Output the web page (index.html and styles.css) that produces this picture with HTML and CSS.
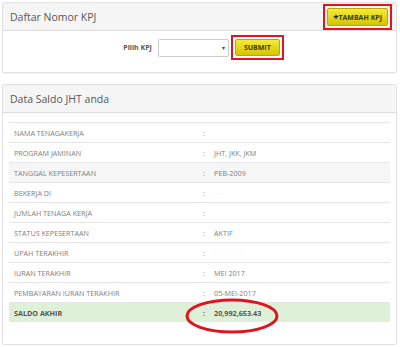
FILE: index.html
```html
<!doctype html>
<html>
  <head>
    <meta charset='utf-8'>
    <title>Saldo JHT</title>
    <link rel="stylesheet" href="styles.css">
  </head>
  <body>

    <div class="panel">
      <div class="panel-head">
        <h3>Daftar Nomor KPJ</h3>
        <span class="mark">
          <button class="btn-yellow btn-add"><b>+</b>TAMBAH KPJ</button>
        </span>
      </div>
      <div class="panel-body kpj-form">
        <label>Pilih KPJ</label>
        <span class="select"><span class="caret">&#9662;</span></span>
        <span class="mark">
          <button class="btn-yellow">SUBMIT</button>
        </span>
      </div>
    </div>

    <div class="panel saldo">
      <div class="panel-head">
        <h3>Data Saldo JHT anda</h3>
      </div>
      <div class="panel-body">
        <table class="data">
          <tr><td>NAMA TENAGAKERJA</td><td>:</td><td class="faint"></td></tr>
          <tr><td>PROGRAM JAMINAN</td><td>:</td><td>JHT, JKK, JKM</td></tr>
          <tr class="grey"><td>TANGGAL KEPESERTAAN</td><td>:</td><td>PEB-2009</td></tr>
          <tr><td>BEKERJA DI</td><td>:</td><td class="faint">&middot;&middot;&middot;&middot;</td></tr>
          <tr><td>JUMLAH TENAGA KERJA</td><td>:</td><td></td></tr>
          <tr><td>STATUS KEPESERTAAN</td><td>:</td><td>AKTIF</td></tr>
          <tr><td>UPAH TERAKHIR</td><td>:</td><td class="faint">&middot; &middot; &middot; &middot; &middot; &middot; &middot; &middot;</td></tr>
          <tr><td>IURAN TERAKHIR</td><td>:</td><td>MEI 2017</td></tr>
          <tr><td>PEMBAYARAN IURAN TERAKHIR</td><td>:</td><td>05-MEI-2017</td></tr>
          <tr class="total"><td>SALDO AKHIR</td><td>:</td><td>20,992,653.43</td></tr>
        </table>
      </div>
      <svg class="circle" width="96" height="40" viewBox="0 0 96 40">
        <ellipse cx="48" cy="20" rx="45" ry="16" fill="none" stroke="#e0141e" stroke-width="3"/>
      </svg>
    </div>

  </body>
</html>
```

FILE: styles.css
```css
body {
  margin: 0;
  padding: 2px 3px 0 2px;
  font-family: 'Open Sans', sans-serif;
  color: #555;
  background: #fff;
}

.panel {
  border: 1px solid #e2e2e2;
  border-radius: 2px;
  box-shadow: 0 1px 2px rgba(0,0,0,.06);
}

.panel-head {
  display: flex;
  align-items: center;
  justify-content: space-between;
  height: 27px;
  padding: 0 4px 0 7px;
  background: #f5f5f5;
  border-bottom: 1px solid #dcdcdc;
}

h3 {
  margin: 0;
  font-size: 10.5px;
  font-weight: 400;
  color: #555;
}

.mark {
  display: inline-block;
  padding: 2px;
  border: 2px solid #e0141e;
}

.btn-yellow {
  display: block;
  font-family: 'Open Sans', sans-serif;
  font-size: 7px;
  font-weight: 700;
  color: #3a3a10;
  background: linear-gradient(#f4ea3a, #d4c500);
  border: 1px solid #b8a900;
  border-radius: 2px;
  height: 17px;
  padding: 0 8px;
}

.btn-add {
  height: 18px;
  padding: 0 5px;
}

.btn-add b {
  font-size: 9px;
  color: #222;
}

.kpj-form {
  display: flex;
  align-items: center;
  justify-content: center;
  gap: 6px;
  height: 33px;
  padding-left: 8px;
  padding-bottom: 8px;
}

.kpj-form label {
  font-size: 7px;
  font-weight: 700;
  color: #555;
}

.select {
  display: flex;
  align-items: center;
  justify-content: flex-end;
  width: 66px;
  height: 16px;
  padding-right: 3px;
  border: 1px solid #ccc;
  border-radius: 2px;
  background: #fff;
  margin-right: -4px;
}

.caret {
  font-size: 6px;
  color: #444;
}

.saldo {
  position: relative;
  margin-top: 11px;
}

.saldo .panel-body {
  padding: 9px 6px 22px 6px;
}

table.data {
  width: 100%;
  border-collapse: collapse;
  border-top: 1px solid #e6e6e6;
  font-size: 7.2px;
  color: #808080;
}

.data td {
  height: 19px;
  padding: 0 5px;
  border-bottom: 1px solid #e6e6e6;
}

.data td:first-child {
  width: 184px;
}

.data td:nth-child(2) {
  width: 0;
  padding: 0 4px 0 0;
}

.data .grey td {
  background: #f6f6f6;
}

.data .faint {
  color: #ddd;
}

.data .total td {
  background: #dff0d8;
  font-weight: 700;
  color: #555;
  border-bottom: 0;
}

.circle {
  position: absolute;
  left: 181px;
  top: 211px;
}
```
